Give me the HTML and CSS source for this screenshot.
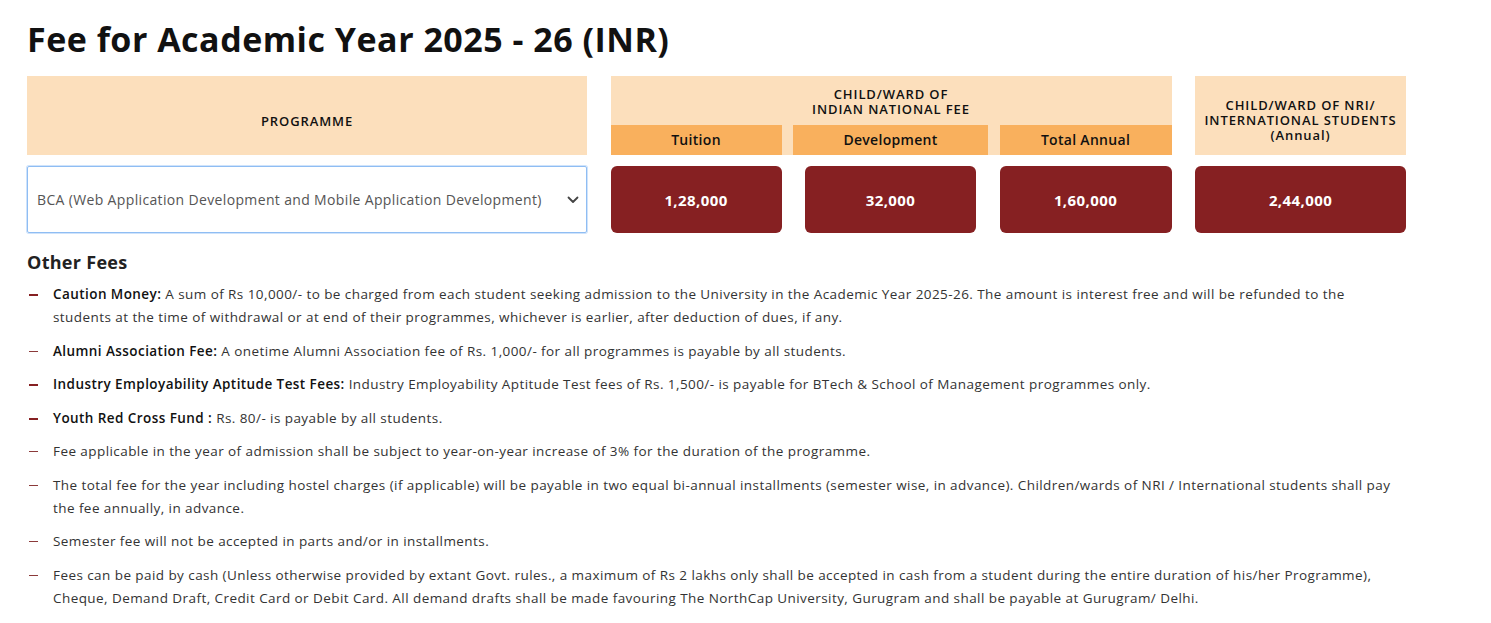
FILE: index.html
```html
<!DOCTYPE html>
<html lang="en">
<head>
<meta charset="utf-8">
<title>Fee for Academic Year 2025 - 26 (INR)</title>
<link rel="stylesheet" href="styles.css">
</head>
<body>
<main class="page">
  <h1 class="title">Fee for Academic Year 2025 - 26 (INR)</h1>

  <section class="fee-table">
    <div class="head head-programme">PROGRAMME</div>
    <div class="head head-group">
      <div class="group-title">CHILD/WARD OF<br>INDIAN NATIONAL FEE</div>
      <div class="sub-row">
        <div class="sub sub-tuition">Tuition</div>
        <div class="sub sub-dev">Development</div>
        <div class="sub sub-total">Total Annual</div>
      </div>
    </div>
    <div class="head head-nri">CHILD/WARD OF NRI/<br>INTERNATIONAL STUDENTS<br>(Annual)</div>

    <div class="select-box">
      <span class="select-text">BCA (Web Application Development and Mobile Application Development)</span>
      <svg class="chevron" width="12" height="8" viewBox="0 0 12 8"><path d="M1.5 1.5 L6 6 L10.5 1.5" fill="none" stroke="#444" stroke-width="1.8" stroke-linecap="round" stroke-linejoin="round"/></svg>
    </div>
    <div class="value v-tuition">1,28,000</div>
    <div class="value v-dev">32,000</div>
    <div class="value v-total">1,60,000</div>
    <div class="value v-nri">2,44,000</div>
  </section>

  <h2 class="other-title">Other Fees</h2>
  <ul class="fees">
    <li class="strong"><b>Caution Money:</b> A sum of Rs 10,000/- to be charged from each student seeking admission to the University in the Academic Year 2025-26. The amount is interest free and will be refunded to the students at the time of withdrawal or at end of their programmes, whichever is earlier, after deduction of dues, if any.</li>
    <li><b>Alumni Association Fee:</b> A onetime Alumni Association fee of Rs. 1,000/- for all programmes is payable by all students.</li>
    <li class="strong"><b>Industry Employability Aptitude Test Fees:</b> Industry Employability Aptitude Test fees of Rs. 1,500/- is payable for BTech &amp; School of Management programmes only.</li>
    <li class="strong"><b>Youth Red Cross Fund :</b> Rs. 80/- is payable by all students.</li>
    <li>Fee applicable in the year of admission shall be subject to year-on-year increase of 3% for the duration of the programme.</li>
    <li>The total fee for the year including hostel charges (if applicable) will be payable in two equal bi-annual installments (semester wise, in advance). Children/wards of NRI / International students shall pay the fee annually, in advance.</li>
    <li>Semester fee will not be accepted in parts and/or in installments.</li>
    <li>Fees can be paid by cash (Unless otherwise provided by extant Govt. rules., a maximum of Rs 2 lakhs only shall be accepted in cash from a student during the entire duration of his/her Programme), Cheque, Demand Draft, Credit Card or Debit Card. All demand drafts shall be made favouring The NorthCap University, Gurugram and shall be payable at Gurugram/ Delhi.</li>
  </ul>
</main>
</body>
</html>
```

FILE: styles.css
```css
* { box-sizing: border-box; }
html, body { margin: 0; padding: 0; background: #fff; }
body {
  font-family: "Open Sans", "DejaVu Sans", sans-serif;
  color: #222;
}
.page {
  width: 1434px;
  padding: 0 27px;
}
.title {
  margin: 0;
  padding-top: 18px;
  height: 76px;
  font-size: 34px;
  font-weight: 700;
  letter-spacing: 0.5px;
  line-height: 42px;
  color: #111;
}
.fee-table {
  display: grid;
  grid-template-columns: 560px 171px 171px 172px 211px;
  column-gap: 23.5px;
  row-gap: 11px;
  width: 1380px;
}
.head {
  background: #fcdfbc;
  height: 79px;
  font-size: 13px;
  font-weight: 600;
  letter-spacing: 0.9px;
  color: #111;
  text-align: center;
}
.head-programme {
  display: flex;
  align-items: center;
  justify-content: center;
  padding-top: 10px;
}
.head-group {
  grid-column: 2 / 5;
  display: flex;
  flex-direction: column;
}
.group-title {
  height: 49px;
  padding-top: 11px;
  line-height: 15px;
}
.sub-row {
  display: flex;
  justify-content: space-between;
  height: 30px;
}
.sub {
  background: #f9b05d;
  font-size: 14px;
  font-weight: 600;
  letter-spacing: 0.3px;
  line-height: 29px;
  color: #111;
}
.sub-tuition { width: 171px; }
.sub-dev { width: 195px; }
.sub-total { width: 172px; }
.head-nri {
  display: flex;
  align-items: center;
  justify-content: center;
  line-height: 15px;
  padding-top: 10px;
}
.select-box {
  height: 67px;
  border: 1px solid #8fbdf3;
  box-shadow: 0 0 0 1px #cfe3fb;
  border-radius: 2px;
  display: flex;
  align-items: center;
  justify-content: space-between;
  padding: 0 7px 0 9px;
}
.select-text {
  font-size: 14px;
  letter-spacing: 0.35px;
  color: #555;
}
.value {
  height: 67px;
  background: #862022;
  border-radius: 6px;
  color: #fff;
  font-size: 15px;
  font-weight: 700;
  letter-spacing: 0.4px;
  display: flex;
  align-items: center;
  justify-content: center;
}
.other-title {
  margin: 18px 0 0;
  font-size: 18px;
  font-weight: 700;
  letter-spacing: 0.3px;
  line-height: 22px;
  color: #222;
}
.fees {
  list-style: none;
  margin: 10px 0 0;
  padding: 0;
  width: 1374px;
}
.fees li {
  position: relative;
  padding-left: 26px;
  font-size: 13.5px;
  letter-spacing: 0.43px;
  line-height: 23px;
  color: #333;
  margin-bottom: 10.5px;
}
.fees li b { font-weight: 600; color: #111; }
.fees li::before {
  content: "";
  position: absolute;
  left: 2px;
  top: 11px;
  width: 9px;
  height: 1px;
  background: #8b3a3a;
}
.fees li.strong::before { height: 2px; background: #862022; }
```
